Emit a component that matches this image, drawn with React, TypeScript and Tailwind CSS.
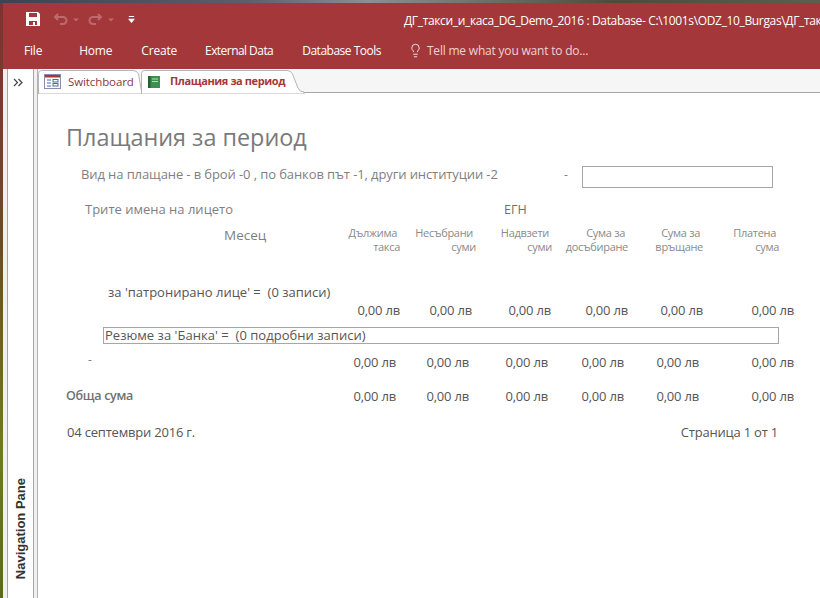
import { Lightbulb } from 'lucide-react';

function Amounts({ widths, className = '' }: { widths: string[]; className?: string }) {
  return (
    <div className={`flex text-[13px] leading-4 tracking-[-0.2px] text-[#555] ${className}`}>
      {widths.map((w, i) => (
        <span key={i} className={`${w} text-right`}>0,00 лв</span>
      ))}
    </div>
  );
}

const detailCols = ['w-[52px]', 'w-[72px]', 'w-[79px]', 'w-[77px]', 'w-[75px]', 'w-[91px]'];
const totalCols = ['w-[52px]', 'w-[73px]', 'w-[79px]', 'w-[76px]', 'w-[75px]', 'w-[95px]'];

function ColHead({ a, b, w }: { a: string; b: string; w: string }) {
  return (
    <div className={`${w} text-[11px] leading-[14px] tracking-[-0.3px] text-[#8a8a8a] text-right`}>
      <div className="pr-[3px]">{a}</div>
      <div>{b}</div>
    </div>
  );
}

export default function App() {
  return (
    <div className="w-[820px] h-[598px] overflow-hidden flex flex-col bg-white font-['Open_Sans',sans-serif]">
      <div className="h-[3px] bg-[linear-gradient(90deg,#3b4450,#59606a_30%,#8a8f98_45%,#4a4d3a_75%,#5a5f50)]" />
      <div className="flex-1 flex min-h-0">
        <div className="w-[3px] bg-[linear-gradient(180deg,#7c3333,#6d4a25_40%,#6f7a22_75%,#5a6a22)]" />
        <div className="flex-1 flex flex-col min-w-0">
          {/* title bar + ribbon tabs */}
          <div className="h-[66px] bg-[#a4373a] text-white flex flex-col">
            <div className="h-[32px] flex items-center relative">
              <svg width="16" height="16" viewBox="0 0 16 16" className="ml-[22px]" fill="#fff">
                <path fillRule="evenodd" d="M1 1h12l2 2v12H1zM4 2v4h8V2zM4 10v4h8v-4z" />
                <path d="M8 11h2v3H8z" />
              </svg>
              <svg width="36" height="14" viewBox="0 0 36 14" className="ml-[12px]" fill="none" stroke="#bd6a6c" strokeWidth="2">
                <path d="M5 2 2 5l3 3M2 5h8a3.5 3.5 0 0 1 0 7H7" />
                <path d="M20 6.5l3 3 3-3z" fill="#bd6a6c" stroke="none" />
              </svg>
              <svg width="36" height="14" viewBox="0 0 36 14" className="-ml-[2px]" fill="none" stroke="#bd6a6c" strokeWidth="2">
                <path d="M11 2l3 3-3 3M14 5H6a3.5 3.5 0 0 0 0 7h3" />
                <path d="M21 6.5l3 3 3-3z" fill="#bd6a6c" stroke="none" />
              </svg>
              <svg width="7" height="8" viewBox="0 0 8 9" className="ml-[5px] mt-[2px]" fill="#fff">
                <path d="M1 0h6v1H1zM0 3h8L4 8z" />
              </svg>
              <span className="absolute left-[401px] top-[10px] whitespace-nowrap text-[12px] leading-4 tracking-[-0.35px]">
                ДГ_такси_и_каса_DG_Demo_2016 : Database- C:\1001s\ODZ_10_Burgas\ДГ_так
              </span>
            </div>
            <div className="flex items-center h-[30px] text-[12px] tracking-[-0.2px] pt-[1px]">
              <span className="ml-[21px]">File</span>
              <span className="ml-[37px]">Home</span>
              <span className="ml-[29px]">Create</span>
              <span className="ml-[28px] tracking-[-0.55px]">External Data</span>
              <span className="ml-[29px] tracking-[-0.5px]">Database Tools</span>
              <Lightbulb size={15} strokeWidth={1.3} className="ml-[27px]" />
              <span className="ml-[4px] text-[#ecd3d4]">Tell me what you want to do...</span>
            </div>
          </div>

          <div className="flex-1 flex min-h-0">
            <div className="w-[4px] shrink-0 bg-[#f0f0f0]" />
            {/* navigation pane */}
            <div className="w-[27px] shrink-0 bg-white border-l border-r border-l-[#a6a6a6] border-r-[#a6a6a6] flex flex-col items-center justify-between">
              <svg width="10" height="9" viewBox="0 0 10 9" className="mt-[9px] mr-[6px]" fill="none" stroke="#444" strokeWidth="1.2">
                <path d="M1 1l3.5 3.5L1 8M5.5 1 9 4.5 5.5 8" />
              </svg>
              <span className="[writing-mode:vertical-rl] rotate-180 text-[13px] font-bold text-[#333] mb-[19px] font-['Liberation_Sans',sans-serif]">
                Navigation Pane
              </span>
            </div>
            <div className="w-[4px] shrink-0 bg-[#f0f0f0] border-r border-r-[#b4b4b4]" />

            <div className="flex-1 flex flex-col min-w-0">
              {/* object tabs */}
              <div className="h-[24px] shrink-0 bg-[#f6f6f6] border-b border-b-[#a6a6a6] relative">
                <svg width="300" height="24" viewBox="0 0 300 24" className="absolute left-0 top-[1px]" fill="#fff" stroke="#b5b5b5">
                  <path d="M0.5 24V3.5Q0.5 0.5 3.5 0.5H95Q99 0.5 100.5 4L104 24Z" />
                  <path d="M103.5 24V3.5Q103.5 0.5 106.5 0.5H249Q253 0.5 254.5 4L260 18Q261.5 22 266 22V24Z" />
                </svg>
                <div className="absolute left-0 top-[1px] h-[23px] flex items-center">
                  <svg width="17" height="15" viewBox="0 0 17 15" className="ml-[6px]">
                    <rect x="0.5" y="0.5" width="16" height="14" fill="#fff" stroke="#8a8ab0" />
                    <rect x="1" y="1" width="15" height="2.5" fill="#a4373a" />
                    <path d="M3 6h4M3 9h4M3 12h4" stroke="#4a6aa8" strokeWidth="1" />
                    <rect x="9" y="5.5" width="5" height="2.5" fill="#fff" stroke="#4a6aa8" />
                    <rect x="9" y="9.5" width="5" height="2.5" fill="#fff" stroke="#4a6aa8" />
                  </svg>
                  <span className="ml-[7px] text-[11.5px] text-[#8a3a3c] tracking-[-0.1px]">Switchboard</span>
                </div>
                <div className="absolute left-[103px] top-[1px] h-[23px] flex items-center">
                  <svg width="14" height="14" viewBox="0 0 14 14" className="ml-[6px]">
                    <rect x="1" y="1" width="12" height="12" fill="#3f8f4f" />
                    <rect x="1" y="1" width="2.5" height="12" fill="#26602f" />
                    <path d="M5 4h6M5 6.5h6" stroke="#b7dcb9" />
                  </svg>
                  <span className="ml-[9px] text-[11px] font-bold text-[#a4373a] tracking-[-0.4px]">Плащания за период</span>
                </div>
              </div>

              {/* report */}
              <div className="flex-1 pl-[28px] pr-[26px] pt-[29px] text-[#7f7f7f] min-h-0">
                <h1 className="text-[23.4px] leading-[30px] text-[#7a7a7a]">Плащания за период</h1>

                <div className="mt-[13px] ml-[15px] flex items-center h-[24px]">
                  <span className="text-[13px] w-[483px] mb-[4px] tracking-[-0.1px]">Вид на плащане - в брой -0 , по банков път -1, други институции -2</span>
                  <span className="text-[12px] mb-[4px]">-</span>
                  <div className="ml-[14px] w-[191px] h-[22px] border border-[#a6a6a6] bg-white" />
                </div>

                <div className="mt-[12px] ml-[19px] flex h-[18px] items-center text-[13px]">
                  <span className="w-[419px]">Трите имена на лицето</span>
                  <span className="text-[12.5px] text-[#6f6f6f]">ЕГН</span>
                </div>

                <div className="mt-[4px] flex h-[46px]">
                  <span className="ml-[158px] w-[96px] mt-[4px] text-[13.5px] leading-[16px]">Месец</span>
                  <div className="flex ml-[10px] mt-[3px]">
                    <ColHead a="Дължима" b="такса" w="w-[70px]" />
                    <ColHead a="Несъбрани" b="суми" w="w-[76px]" />
                    <ColHead a="Надвзети" b="суми" w="w-[76px]" />
                    <ColHead a="Сума за" b="досъбиране" w="w-[76px]" />
                    <ColHead a="Сума за" b="връщане" w="w-[75px]" />
                    <ColHead a="Платена" b="сума" w="w-[76px]" />
                  </div>
                </div>

                <div className="mt-[15px] ml-[42px] h-[16px] text-[13px] leading-4 text-[#555]">за 'патронирано лице' = &nbsp;(0 записи)</div>
                <Amounts widths={detailCols} className="mt-[2px] ml-[282px]" />
                <div className="mt-[9px] ml-[37px] w-[676px] h-[17px] border border-[#a6a6a6] pl-[1px] text-[13px] leading-[15px] tracking-[0.03px] text-[#555] overflow-hidden">Резюме за 'Банка' = &nbsp;(0 подробни записи)</div>
                <div className="mt-[10px] flex h-[16px]">
                  <span className="ml-[22px] w-[256px] text-[12px] -mt-[3px]">-</span>
                  <Amounts widths={totalCols} />
                </div>
                <div className="mt-[18px] flex h-[16px]">
                  <span className="w-[278px] text-[12.5px] leading-4 font-semibold tracking-[-0.3px] text-[#707070]">Обща сума</span>
                  <Amounts widths={totalCols} />
                </div>
                <div className="mt-[20px] flex justify-between h-[16px] text-[13px] leading-4 tracking-[-0.2px] text-[#555] w-[712px] pl-[1px]">
                  <span>04 септември 2016 г.</span>
                  <span>Страница 1 от 1</span>
                </div>
              </div>
            </div>
          </div>
        </div>
      </div>
    </div>
  );
}
